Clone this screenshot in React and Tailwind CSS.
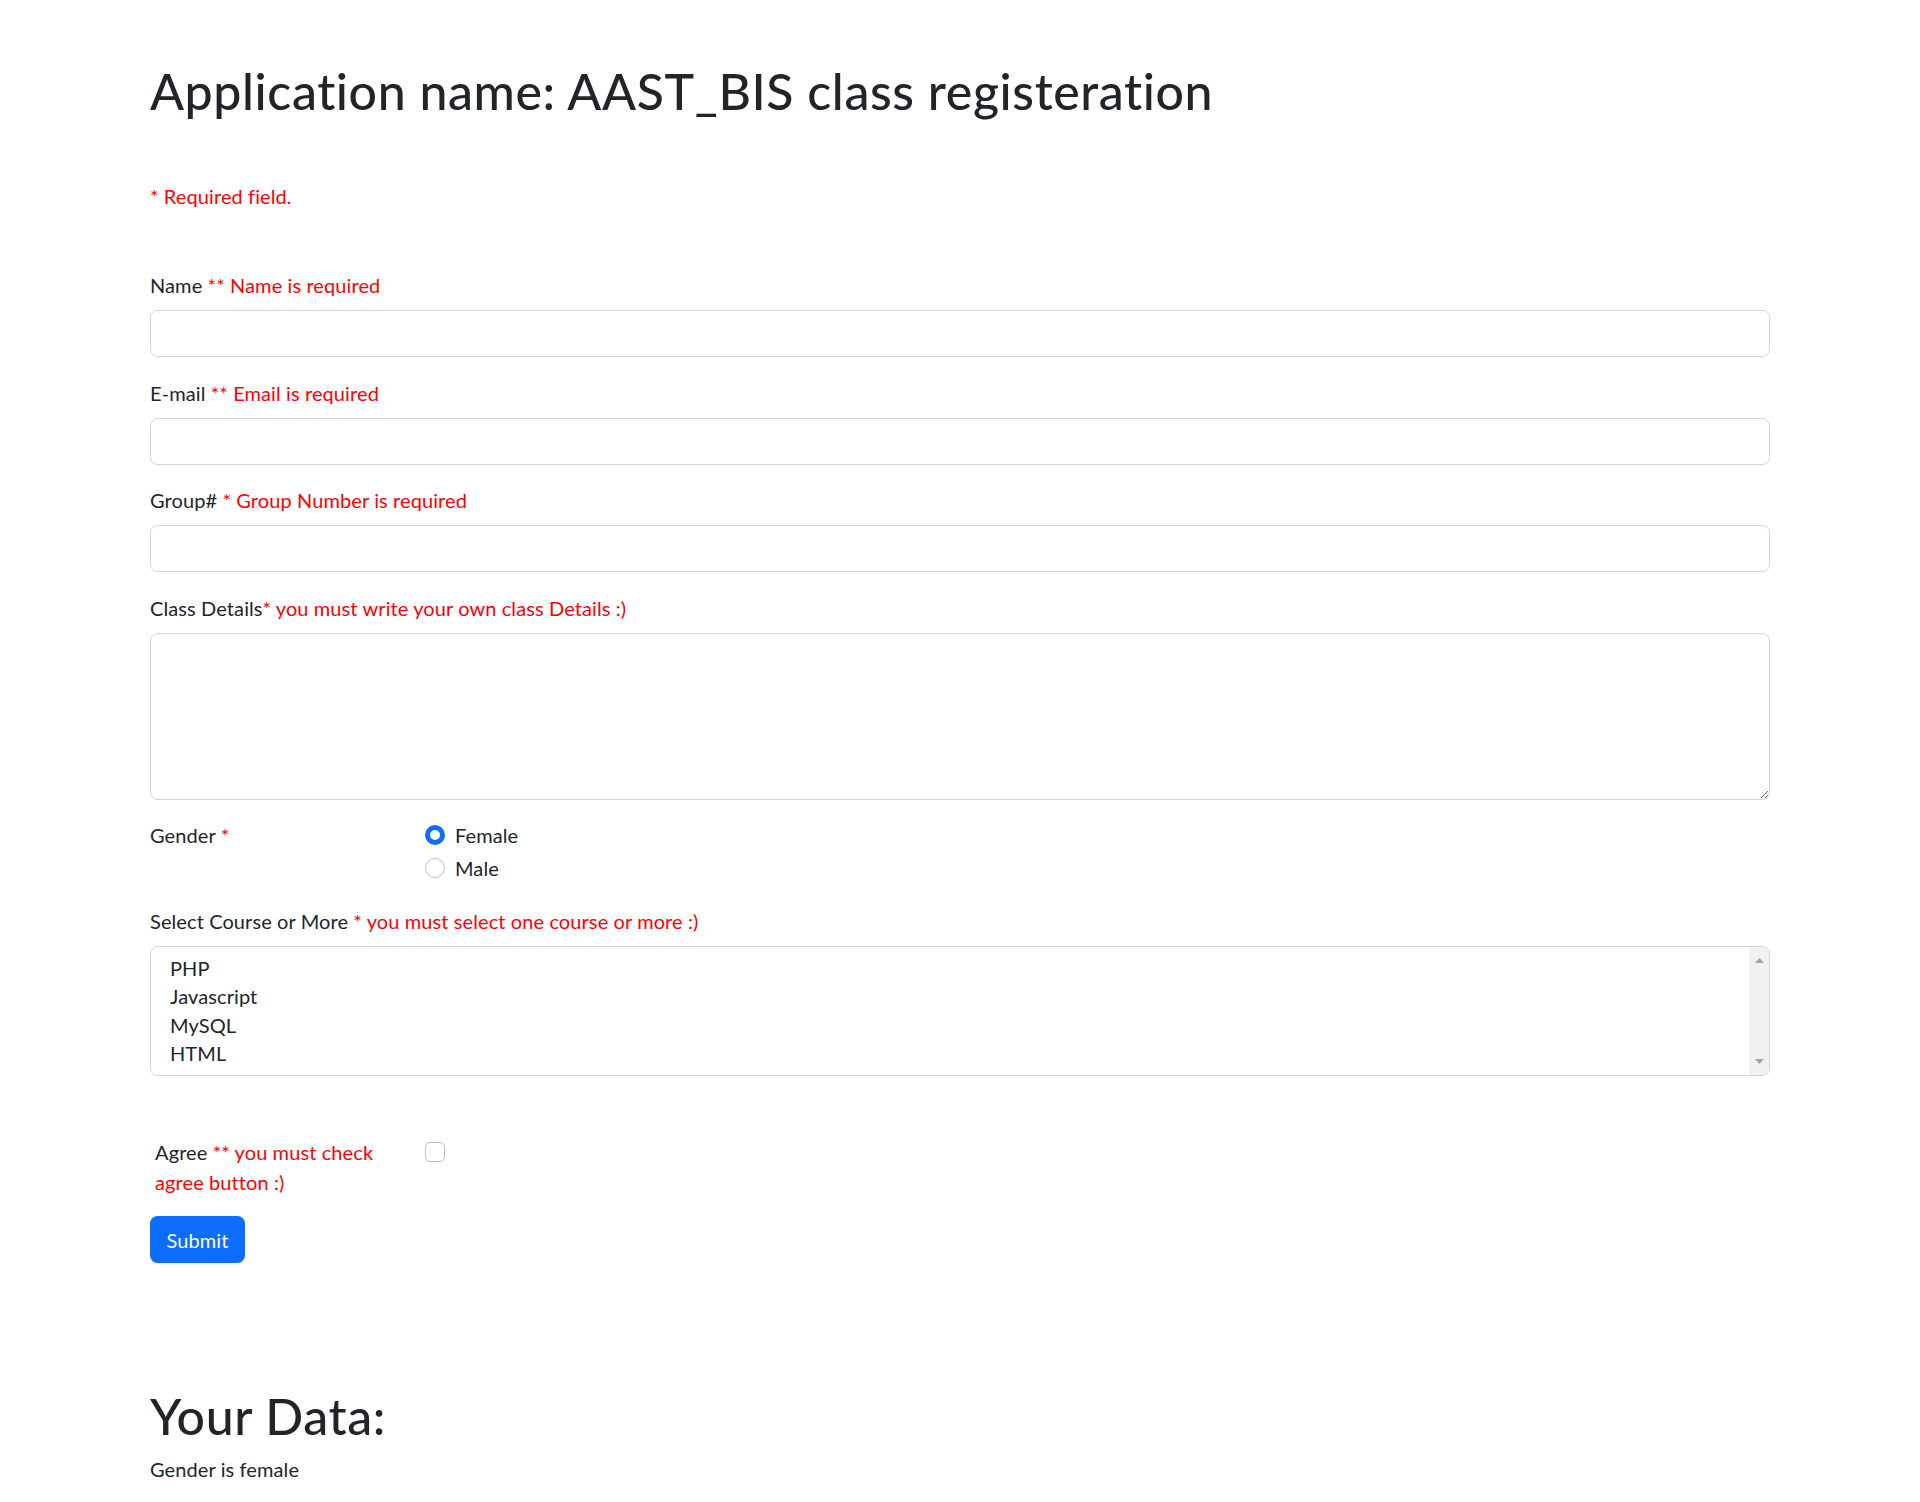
const Req = ({ children }) => <span className="text-[#ff0000]">{children}</span>;

const Field = ({ label, note }) => (
  <div className="mb-[20.5px]">
    <label className="block h-[30px] leading-[30px]">
      {label} <Req>{note}</Req>
    </label>
    <input
      type="text"
      className="mt-[10px] block h-[47px] w-full rounded-[7.5px] border border-[#ced4da] bg-white px-[15px] text-[20px] outline-none"
    />
  </div>
);

const Radio = ({ checked, label }) => (
  <div className="flex h-[30px] items-center mb-[2.5px]">
    {checked ? (
      <span className="flex h-[20px] w-[20px] items-center justify-center rounded-full bg-[#0d6efd]">
        <span className="h-[10px] w-[10px] rounded-full bg-white"></span>
      </span>
    ) : (
      <span className="h-[20px] w-[20px] rounded-full border border-[#bfbfbf] bg-white"></span>
    )}
    <span className="ml-[10px]">{label}</span>
  </div>
);

export default function App() {
  const courses = ["PHP", "Javascript", "MySQL", "HTML"];

  return (
    <div className="min-h-screen bg-white font-['Lato','Liberation_Sans',sans-serif] text-[20px] leading-[30px] tracking-[0.1px] text-[#212529]">
      <div className="mx-auto w-[1620px] pt-[61px]">
        <h1 className="h-[60px] text-[50px] font-medium leading-[60px] tracking-[0.6px]">
          Application name: AAST_BIS class registeration
        </h1>
        <p className="mt-[60px] text-[#ff0000]">* Required field.</p>

        <form className="mt-[59px]">
          <Field label="Name" note="** Name is required" />
          <Field label="E-mail" note="** Email is required" />
          <Field label="Group#" note="* Group Number is required" />

          <div className="mb-[20.5px]">
            <label className="block h-[30px]">
              Class Details<Req>* you must write your own class Details :)</Req>
            </label>
            <textarea className="mt-[10px] block h-[167px] w-full rounded-[7.5px] border border-[#ced4da] bg-white px-[15px] py-[7.5px] outline-none"></textarea>
          </div>

          <div className="mb-[20.5px] flex">
            <div className="w-[275px]">
              Gender <Req>*</Req>
            </div>
            <div>
              <Radio checked label="Female" />
              <Radio label="Male" />
            </div>
          </div>

          <div>
            <label className="block h-[30px]">
              Select Course or More <Req>* you must select one course or more :)</Req>
            </label>
            <div className="mt-[10px] flex h-[130px] overflow-hidden rounded-[7.5px] border border-[#ced4da] bg-white">
              <div className="flex-1 pl-[16px] pt-[7.5px]">
                {courses.map((c) => (
                  <div key={c} className="h-[28.3px] px-[3px] leading-[28px]">
                    {c}
                  </div>
                ))}
              </div>
              <div className="flex w-[20px] flex-col items-center justify-between bg-[#f1f1f1] py-[11px]">
                <svg width="9" height="5" viewBox="0 0 9 5">
                  <path d="M0 5 L4.5 0 L9 5 Z" fill="#a3a3a3" />
                </svg>
                <svg width="9" height="5" viewBox="0 0 9 5">
                  <path d="M0 0 L4.5 5 L9 0 Z" fill="#a3a3a3" />
                </svg>
              </div>
            </div>
          </div>

          <div className="mt-[61.5px] flex">
            <div className="w-[275px] pl-[5px]">
              Agree <Req>** you must check</Req>
              <br />
              <Req>agree button :)</Req>
            </div>
            <div className="pt-[5px]">
              <span className="block h-[20px] w-[20px] rounded-[5px] border border-[#bfbfbf] bg-white"></span>
            </div>
          </div>

          <button
            type="button"
            className="mt-[19px] block h-[47px] rounded-[7.5px] bg-[#0d6efd] px-[16.5px] text-white"
          >
            Submit
          </button>
        </form>

        <h1 className="mt-[123px] h-[60px] text-[50px] font-medium leading-[60px] tracking-[0.6px]">Your Data:</h1>
        <p className="mt-[8px]">Gender is female</p>
      </div>
    </div>
  );
}
